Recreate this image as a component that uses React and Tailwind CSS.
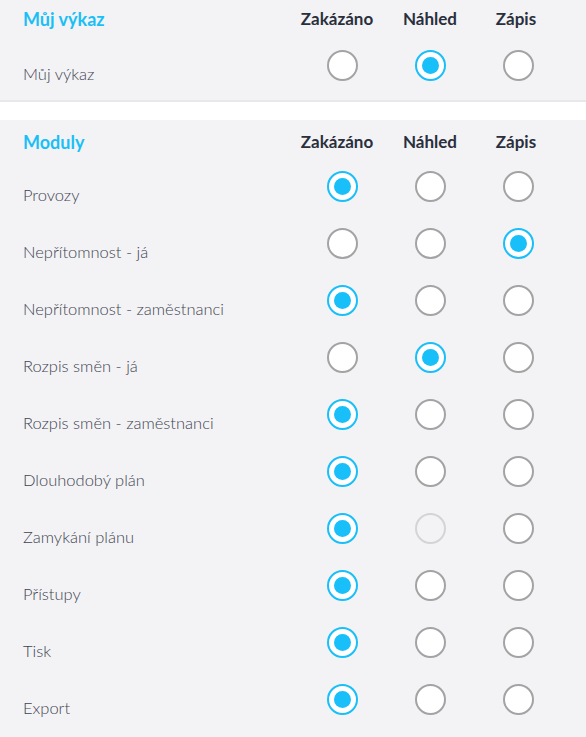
const columns = ["Zakázáno", "Náhled", "Zápis"];

const modules = [
  { name: "Provozy", value: 0 },
  { name: "Nepřítomnost - já", value: 2 },
  { name: "Nepřítomnost - zaměstnanci", value: 0 },
  { name: "Rozpis směn - já", value: 1 },
  { name: "Rozpis směn - zaměstnanci", value: 0 },
  { name: "Dlouhodobý plán", value: 0 },
  { name: "Zamykání plánu", value: 0, disabled: [1] },
  { name: "Přístupy", value: 0 },
  { name: "Tisk", value: 0 },
  { name: "Export", value: 0 },
];

function Radio({ checked, disabled }) {
  if (checked) {
    return (
      <span className="w-[31px] h-[31px] rounded-full border-2 border-[#18bff8] bg-white flex items-center justify-center">
        <span className="w-[17px] h-[17px] rounded-full bg-[#18bff8]" />
      </span>
    );
  }
  return (
    <span
      className={`w-[31px] h-[31px] rounded-full border-2 ${
        disabled ? "border-[#d4d4d6] bg-[#f3f3f5]" : "border-[#a3a3a6] bg-white"
      }`}
    />
  );
}

function HeaderRow({ title, className }) {
  return (
    <div className={`flex items-start ${className}`}>
      <h2 className="flex-1 text-[18px] leading-6 font-bold text-[#1bbff7]">{title}</h2>
      <div className="w-[88px] flex justify-center pr-[10px] text-[17px] leading-6 font-bold text-[#2a2f3d]">
        {columns[0]}
      </div>
      <div className="w-[88px] flex justify-center text-[17px] leading-6 font-bold text-[#2a2f3d]">
        {columns[1]}
      </div>
      <div className="w-[88px] flex justify-center pr-[4px] text-[17px] leading-6 font-bold text-[#2a2f3d]">
        {columns[2]}
      </div>
    </div>
  );
}

function Row({ item }) {
  return (
    <div className="flex items-center h-[57px]">
      <span className="flex-1 mt-4 text-[16.5px] leading-6 font-light text-[#3f4452]">{item.name}</span>
      {columns.map((col, i) => (
        <div key={col} className="w-[88px] flex justify-center">
          <Radio checked={item.value === i} disabled={item.disabled?.includes(i)} />
        </div>
      ))}
    </div>
  );
}

export default function App() {
  return (
    <div
      className="w-[586px] min-h-[737px] bg-white"
      style={{ fontFamily: "Lato, 'Noto Sans', sans-serif" }}
    >
      <section className="bg-[#f3f3f5] pl-[23px] pr-[24px] pt-[7px] pb-[6px] border-b-2 border-[#e8e8ea]">
        <HeaderRow title="Můj výkaz" className="h-[30px]" />
        <Row item={{ name: "Můj výkaz", value: 1 }} />
      </section>
      <section className="mt-[18px] bg-[#f3f3f5] pl-[23px] pr-[24px] pt-[10px] pb-[9px]">
        <HeaderRow title="Moduly" className="h-[28px]" />
        {modules.map((m) => (
          <Row key={m.name} item={m} />
        ))}
      </section>
    </div>
  );
}
